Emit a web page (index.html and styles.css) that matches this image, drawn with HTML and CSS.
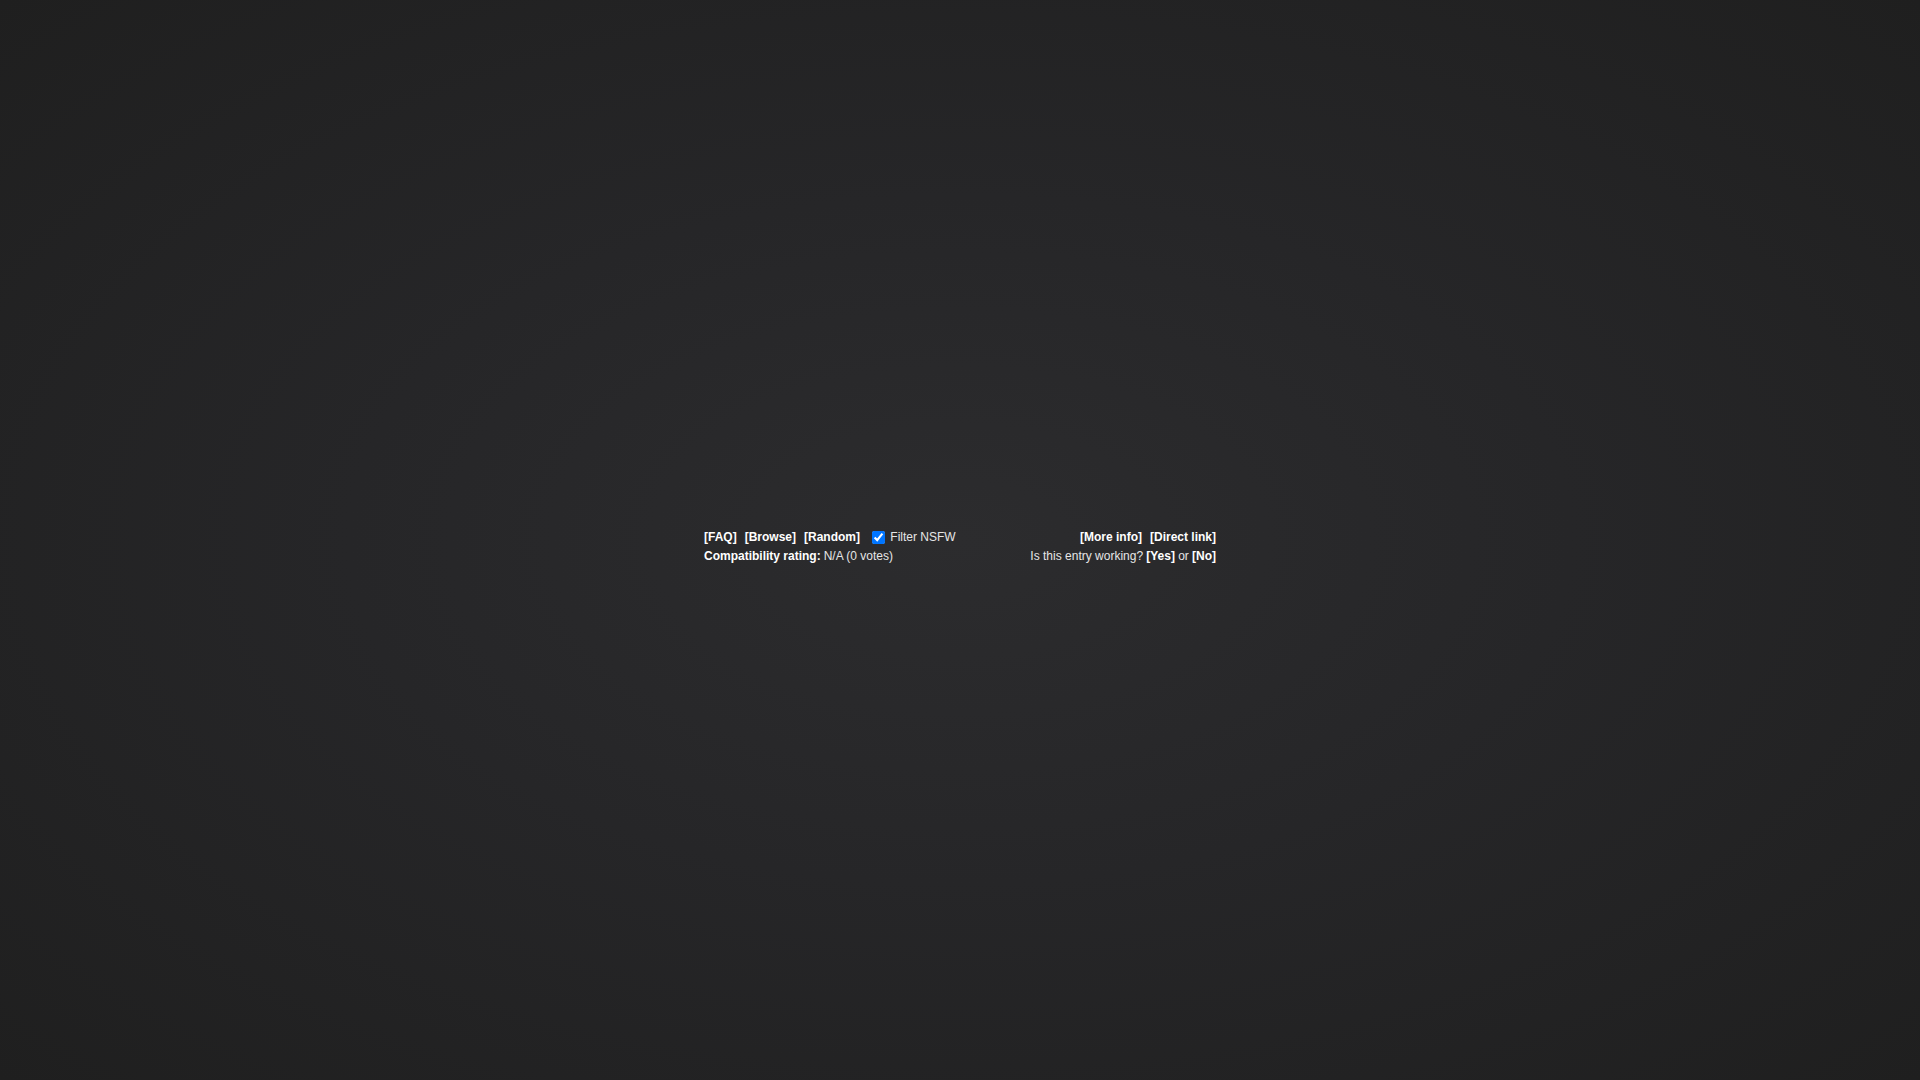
FILE: index.html
```html
<!DOCTYPE html>
<html>
<head>
<meta charset="utf-8">
<title>Player</title>
<link rel="stylesheet" href="styles.css">
</head>
<body>
<div class="page">
  <div class="player"></div>
  <div class="info">
    <div class="row">
      <div class="left">
        <a class="link" href="#">[FAQ]</a>
        <a class="link" href="#">[Browse]</a>
        <a class="link" href="#">[Random]</a>
        <label class="nsfw"><input type="checkbox" checked> Filter NSFW</label>
      </div>
      <div class="right">
        <a class="link" href="#">[More info]</a>
        <a class="link last" href="#">[Direct link]</a>
      </div>
    </div>
    <div class="row">
      <div class="left"><b>Compatibility rating:</b> N/A (0 votes)</div>
      <div class="right">Is this entry working? <a class="link plain" href="#">[Yes]</a> or <a class="link plain" href="#">[No]</a></div>
    </div>
  </div>
</div>
</body>
</html>
```
FILE: styles.css
```css
html, body {
  margin: 0;
  padding: 0;
  height: 100%;
}
body {
  background: radial-gradient(ellipse at center, #2c2c2e 0%, #262628 45%, #1f1f1f 100%);
  color: #e6e6e6;
  font-family: "Liberation Sans", Arial, sans-serif;
  font-size: 12px;
}
.page {
  display: flex;
  flex-direction: column;
  align-items: center;
  padding-top: 143px;
}
.player {
  width: 512px;
  height: 384px;
}
.info {
  width: 512px;
}
.row {
  display: flex;
  justify-content: space-between;
  align-items: center;
  height: 19px;
  line-height: 19px;
}
.row:first-child {
  height: 20px;
  line-height: 20px;
}
.left, .right {
  display: flex;
  align-items: center;
  white-space: nowrap;
}
.link {
  color: #ffffff;
  font-weight: bold;
  text-decoration: none;
  margin-right: 8px;
}
.link.last { margin-right: 0; }
.link.plain { margin-right: 0; }
b { color: #ffffff; margin-right: 3px; }
.right .link.plain { margin: 0 3.2px; }
.right .link.plain:last-child { margin-right: 0; }
.nsfw {
  display: flex;
  align-items: center;
  margin-left: 4px;
  white-space: pre;
}
.nsfw input {
  width: 13px;
  height: 13px;
  margin: 3px 2px 3px 0;
  accent-color: #0075ff;
}
```
